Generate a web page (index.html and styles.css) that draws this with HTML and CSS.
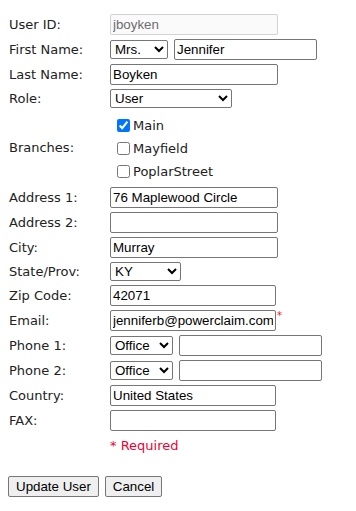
FILE: index.html
```html
<!DOCTYPE html>
<html lang="en">
<head>
    <meta charset="UTF-8">
    <title>Edit User</title>
    <link rel="stylesheet" href="styles.css">
</head>
<body>
    <form class="user-form">
        <table class="form-table">
            <tr>
                <td class="label">User ID:</td>
                <td><input type="text" class="w168" value="jboyken" disabled></td>
            </tr>
            <tr>
                <td class="label">First Name:</td>
                <td>
                    <div class="pair">
                        <select class="sel-title"><option>Mrs.</option></select>
                        <input type="text" class="w143" value="Jennifer">
                    </div>
                </td>
            </tr>
            <tr>
                <td class="label">Last Name:</td>
                <td><input type="text" class="w168" value="Boyken"></td>
            </tr>
            <tr>
                <td class="label">Role:</td>
                <td><select class="sel-role"><option>User</option></select></td>
            </tr>
            <tr>
                <td class="label">Branches:</td>
                <td>
                    <div class="branches">
                        <label class="branch"><input type="checkbox" checked>Main</label>
                        <label class="branch"><input type="checkbox">Mayfield</label>
                        <label class="branch"><input type="checkbox">PoplarStreet</label>
                    </div>
                </td>
            </tr>
            <tr>
                <td class="label">Address 1:</td>
                <td><input type="text" class="w168" value="76 Maplewood Circle"></td>
            </tr>
            <tr>
                <td class="label">Address 2:</td>
                <td><input type="text" class="w168" value=""></td>
            </tr>
            <tr>
                <td class="label">City:</td>
                <td><input type="text" class="w168" value="Murray"></td>
            </tr>
            <tr>
                <td class="label">State/Prov:</td>
                <td><select class="sel-state"><option>KY</option></select></td>
            </tr>
            <tr>
                <td class="label">Zip Code:</td>
                <td><input type="text" class="w166" value="42071"></td>
            </tr>
            <tr>
                <td class="label">Email:</td>
                <td><input type="text" class="w166" value="jenniferb@powerclaim.com"><sup class="req">*</sup></td>
            </tr>
            <tr>
                <td class="label">Phone 1:</td>
                <td>
                    <div class="pair">
                        <select class="sel-phone"><option>Office</option></select>
                        <input type="text" class="w143" value="">
                    </div>
                </td>
            </tr>
            <tr>
                <td class="label">Phone 2:</td>
                <td>
                    <div class="pair">
                        <select class="sel-phone"><option>Office</option></select>
                        <input type="text" class="w143" value="">
                    </div>
                </td>
            </tr>
            <tr>
                <td class="label">Country:</td>
                <td><input type="text" class="w166" value="United States"></td>
            </tr>
            <tr>
                <td class="label">FAX:</td>
                <td><input type="text" class="w166" value=""></td>
            </tr>
            <tr>
                <td class="label"></td>
                <td class="required-note">* Required</td>
            </tr>
        </table>

        <div class="actions">
            <button type="submit">Update User</button>
            <button type="button">Cancel</button>
        </div>
    </form>
</body>
</html>
```

FILE: styles.css
```css
body {
    margin: 8px;
    background: #fff;
    color: #222;
    font-family: "DejaVu Sans", Verdana, sans-serif;
    font-size: 13px;
}

.user-form {
    margin-top: 3px;
}

.form-table {
    border-collapse: separate;
    border-spacing: 0 2px;
}

.form-table td {
    padding: 1px 0;
    vertical-align: middle;
}

.form-table td.label {
    width: 101px;
    padding-left: 1px;
    white-space: nowrap;
}

input[type="text"],
select,
button {
    font-family: "Liberation Sans", Arial, sans-serif;
    font-size: 13.33px;
    color: #000;
    box-sizing: border-box;
    margin: 0;
    vertical-align: middle;
}

input[type="text"] {
    height: 21px;
    padding: 1px 2px;
    border: 1px solid #767676;
    border-radius: 2px;
    background: #fff;
}

input[type="text"]:disabled {
    background: rgba(239, 239, 239, 0.3);
    border-color: rgba(118, 118, 118, 0.3);
    color: #6d6d6d;
}

select {
    height: 19px;
    border: 1px solid #767676;
    border-radius: 2px;
    background: #fff;
}

.w168 { width: 168px; }
.w166 { width: 166px; }
.w143 { width: 143px; }

.sel-title { width: 58px; }
.sel-role { width: 122px; }
.sel-state { width: 71px; }
.sel-phone { width: 63px; }

.pair {
    display: flex;
    align-items: center;
    gap: 6px;
}

.branches {
    display: flex;
    flex-direction: column;
    padding-top: 2px;
}

.branch {
    display: flex;
    align-items: center;
    height: 23px;
}

.branch input {
    width: 13px;
    height: 13px;
    margin: 0 3px 0 7px;
}

.req {
    color: #ee1122;
    font-size: 10px;
    margin-left: 1px;
}

.required-note {
    color: #ee0033;
    height: 16px;
}

.form-table td.required-note {
    padding-top: 3px;
}

.actions {
    margin-top: 20px;
    display: flex;
    gap: 6px;
}

button {
    height: 21px;
    padding: 1px 7px;
    border: 1px solid #767676;
    border-radius: 2px;
    background: #efefef;
}
```
